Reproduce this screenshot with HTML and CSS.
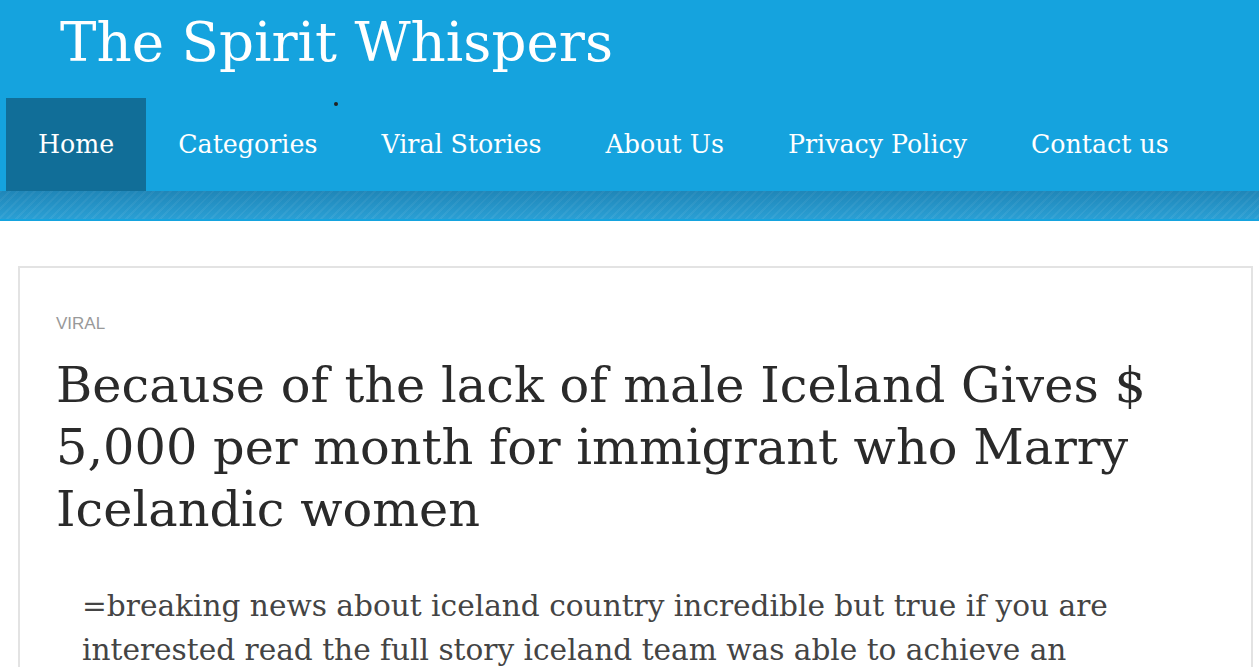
FILE: index.html
```html
<!DOCTYPE html>
<html lang="en">
<head>
  <meta charset="UTF-8" />
  <meta name="viewport" content="width=device-width, initial-scale=1.0" />
  <title>The Spirit Whispers</title>
  <link rel="stylesheet" href="styles.css">
</head>
<body>
  <header class="site-header">
    <div class="site-title">The Spirit Whispers</div>
    <nav class="main-nav">
      <a href="#" class="active">Home</a>
      <a href="#">Categories</a>
      <a href="#">Viral Stories</a>
      <a href="#">About Us</a>
      <a href="#">Privacy Policy</a>
      <a href="#">Contact us</a>
      <span class="stray-dot"></span>
    </nav>
    <div class="header-stripe"></div>
  </header>

  <main class="content">
    <article class="post-card">
      <div class="post-cat">VIRAL</div>
      <h1 class="post-title">Because of the lack of male Iceland Gives $<br>5,000 per month for immigrant who Marry<br>Icelandic women</h1>
      <p class="post-body">=breaking news about iceland country incredible but true if you are<br>interested read the full story iceland team was able to achieve an</p>
    </article>
  </main>
</body>
</html>
```

FILE: styles.css
```css
body {
  margin: 0;
  padding: 0;
  background-color: #fff;
  font-family: 'DejaVu Serif', serif;
  overflow: hidden;
}

.site-header {
  background-color: #15a3de;
}
.site-title {
  color: #fff;
  font-size: 54.7px;
  line-height: 1;
  padding: 15px 0 0 60px;
  height: 98px;
  box-sizing: border-box;
}

.main-nav {
  display: flex;
  margin-left: 6px;
  height: 93px;
  position: relative;
}
.main-nav a {
  color: #fff;
  text-decoration: none;
  font-size: 25.3px;
  line-height: 93px;
  padding: 0 32px;
}
.main-nav a.active {
  background-color: #116e98;
}
.stray-dot {
  position: absolute;
  left: 328px;
  top: 4px;
  width: 4px;
  height: 4px;
  border-radius: 50%;
  background-color: #222;
}

.header-stripe {
  height: 28px;
  border-bottom: 2px solid #15a3de;
  background-color: #2a9fd4;
  background-image:
    linear-gradient(to bottom, rgba(0, 60, 100, 0.25), rgba(0, 60, 100, 0)),
    repeating-linear-gradient(135deg, rgba(255, 255, 255, 0.06) 0 2px, rgba(255, 255, 255, 0) 2px 6px);
}

.content {
  padding: 45px 6px 0 18px;
}
.post-card {
  border: 2px solid #e3e3e3;
  border-bottom: none;
  padding: 46px 36px 0 36px;
}
.post-cat {
  font-family: 'Liberation Sans', Arial, sans-serif;
  font-size: 17px;
  color: #999;
  text-transform: uppercase;
}
.post-title {
  font-weight: normal;
  font-size: 49.4px;
  line-height: 62px;
  color: #2a2a2a;
  margin: 20px 0 0 0;
}
.post-body {
  font-size: 29.6px;
  line-height: 44px;
  color: #444;
  margin: 44px 0 0 26px;
}
```
